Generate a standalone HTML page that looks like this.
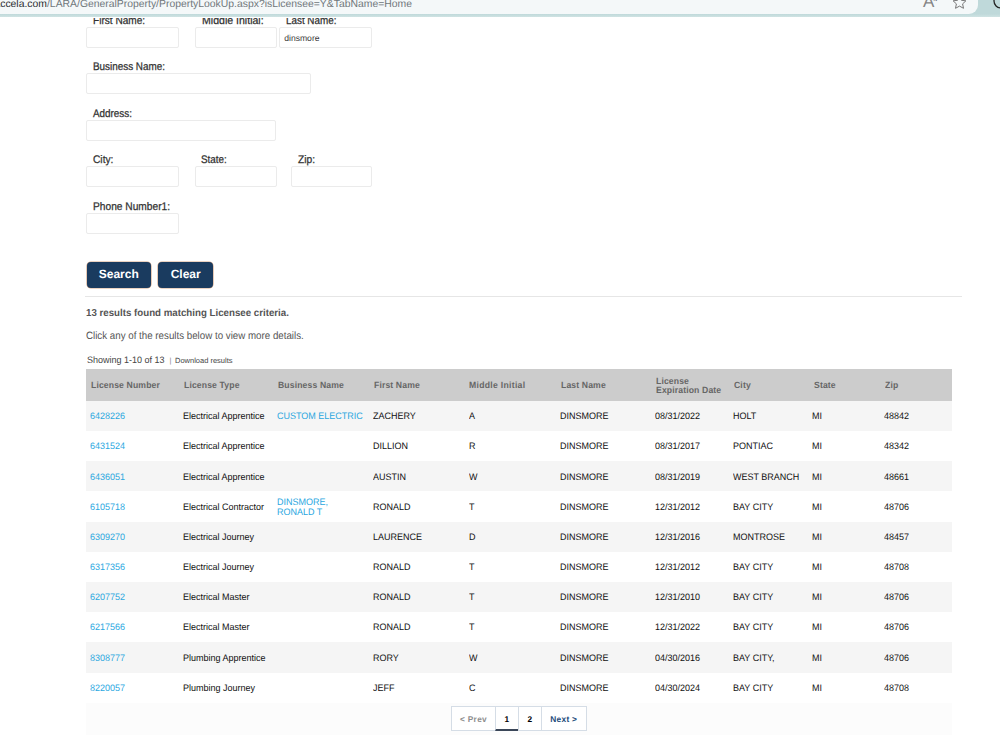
<!DOCTYPE html>
<html lang="en">
<head>
<meta charset="utf-8">
<title>Licensee Search</title>
<style>
*{box-sizing:border-box;margin:0;padding:0}
html,body{width:1000px;height:740px;overflow:hidden;background:#fff;font-family:"Liberation Sans",sans-serif;text-rendering:geometricPrecision}
body{position:relative}
.abs{position:absolute}
#chrome{left:0;top:0;width:1000px;height:18px;background:linear-gradient(#bfd9da 0,#bfd9da 14px,#cfe3e3 17px,#fff 17px,#fff 18px);overflow:hidden;z-index:5}
#pill{left:-20px;top:-20px;width:998px;height:33.5px;background:#f4f8f9;border-radius:0 0 9px 0}
#urltxt{left:-5.6px;top:-0.7px;font-size:10.4px;line-height:12px;color:#70777b;white-space:nowrap}
#urltxt b{font-weight:normal;color:#2a2d30}
.lbl{font-size:11px;line-height:12px;color:#303030;white-space:nowrap;-webkit-text-stroke:0.25px #303030;transform-origin:0 50%;transform:scaleX(.91)}
.inp{border:1px solid #ebebeb;background:#fff;border-radius:2px;height:21px}
.btn{top:262px;height:26px;background:#1a3b5f;border-radius:4px;color:#fff;font-weight:bold;font-size:12px;line-height:24.6px;text-align:center;box-shadow:0 0 0 0.6px rgba(196,128,80,.7)}
#hr{left:85px;top:296px;width:877px;height:1px;background:#e6e6e6}
.t{line-height:12px;white-space:nowrap;transform-origin:0 0}
#tbl{left:86px;top:369px;width:866px}
.hd{position:absolute;left:0;top:0;width:100%;height:32px;background:#cccccc}
.hd span{position:absolute;font-size:9px;font-weight:bold;color:#666;letter-spacing:0.13px;line-height:9px;white-space:nowrap;top:12px;transform-origin:0 0;transform:scaleX(.96)}
.row{position:absolute;left:0;width:100%;height:30.17px;font-size:9.4px;color:#111}
.row.odd{background:#f5f5f5}
.row span{position:absolute;top:9.2px;line-height:12px;white-space:nowrap;transform-origin:0 0;transform:scaleX(.96)}
.row .lnk{color:#2aa7df}
.row .two{top:5.3px;line-height:10px}
.c1{left:4px}.c2{left:96.8px}.c3{left:191px}.c4{left:286.5px}.c5{left:382.5px}.c6{left:473.8px}.c7{left:569px}.c8{left:646.5px}.c9{left:726px}.c10{left:798px}
#foot{left:86px;top:702.7px;width:866px;height:32.3px;background:#fcfcfc}
.pg{position:absolute;top:3.3px;height:25px;border:1px solid #d5dde6;background:#fff;font-size:8.3px;font-weight:bold;text-align:center;line-height:25.5px;color:#8e8e8e;letter-spacing:0.3px}
</style>
</head>
<body>
<div class="abs" id="chrome">
<div class="abs" id="pill"></div>
<div class="abs" id="urltxt"><b>accela.com</b>/LARA/GeneralProperty/PropertyLookUp.aspx?isLicensee=Y&amp;TabName=Home</div>
<div class="abs" style="left:923px;top:-5.5px;font-size:17px;line-height:14px;color:#858585;transform-origin:0 0">A</div>
<div class="abs" style="left:933.5px;top:-3.5px;font-size:5px;line-height:6px;color:#777;font-weight:bold">N</div>
<svg class="abs" style="left:952px;top:-5.5px" width="15" height="15" viewBox="0 0 15 15"><path d="M7.5 1.2l1.9 4.1 4.5.5-3.3 3.1.9 4.4-4-2.2-4 2.2.9-4.4L1.1 5.8l4.5-.5z" fill="none" stroke="#777" stroke-width="1" stroke-linejoin="round"/></svg>
<svg class="abs" style="left:992px;top:-8px" width="18" height="18" viewBox="0 0 18 18"><circle cx="9" cy="9" r="7" fill="none" stroke="#222" stroke-width="1.3"/></svg>
</div>

<div class="abs lbl" style="left:92.6px;top:14.5px;transform:scaleX(.918)">First Name:</div>
<div class="abs lbl" style="left:201.6px;top:14.5px;transform:scaleX(.96)">Middle Initial:</div>
<div class="abs lbl" style="left:285.8px;top:14.5px;transform:scaleX(.896)">Last Name:</div>
<div class="abs inp" style="left:86px;top:27px;width:93px"></div>
<div class="abs inp" style="left:195px;top:27px;width:82px"></div>
<div class="abs inp" style="left:279px;top:27px;width:93px"><span style="position:absolute;left:4.2px;top:5px;font-size:8.6px;line-height:10px;color:#3a3a3a">dinsmore</span></div>

<div class="abs lbl" style="left:93px;top:60.6px;transform:scaleX(.899)">Business Name:</div>
<div class="abs inp" style="left:86px;top:73px;width:225px"></div>

<div class="abs lbl" style="left:92.6px;top:107.6px;transform:scaleX(.898)">Address:</div>
<div class="abs inp" style="left:86px;top:120px;width:190px"></div>

<div class="abs lbl" style="left:92.6px;top:153.8px;transform:scaleX(.927)">City:</div>
<div class="abs lbl" style="left:201.2px;top:153.8px;transform:scaleX(.897)">State:</div>
<div class="abs lbl" style="left:298px;top:153.8px;transform:scaleX(.927)">Zip:</div>
<div class="abs inp" style="left:86px;top:166px;width:93px"></div>
<div class="abs inp" style="left:195px;top:166px;width:82px"></div>
<div class="abs inp" style="left:291px;top:166px;width:81px"></div>

<div class="abs lbl" style="left:92.9px;top:201.2px;transform:scaleX(.927)">Phone Number1:</div>
<div class="abs inp" style="left:86px;top:213px;width:93px"></div>

<div class="abs btn" style="left:86.6px;width:64.4px">Search</div>
<div class="abs btn" style="left:158.2px;width:55px">Clear</div>
<div class="abs" id="hr"></div>

<div class="abs t" style="left:86px;top:308.2px;font-weight:bold;color:#555;font-size:10.1px;transform:scaleX(.962)">13 results found matching Licensee criteria.</div>
<div class="abs t" style="left:86px;top:330.2px;color:#555;font-size:10.6px;transform:scaleX(.92)">Click any of the results below to view more details.</div>
<div class="abs t" style="left:87.4px;top:353.6px;color:#444;font-size:9.4px;transform:scaleX(.959)">Showing 1-10 of 13</div>
<div class="abs t" style="left:169.4px;top:355px;color:#888;font-size:7.5px">|</div>
<div class="abs t" style="left:175px;top:355px;color:#444;font-size:7.5px">Download results</div>

<div class="abs" id="tbl">
<div class="hd">
<span style="left:4.6px">License Number</span>
<span style="left:97.5px">License Type</span>
<span style="left:192px">Business Name</span>
<span style="left:288px">First Name</span>
<span style="left:383px;letter-spacing:.3px">Middle Initial</span>
<span style="left:474.5px">Last Name</span>
<span style="left:570px;top:8px;line-height:9px">License<br>Expiration Date</span>
<span style="left:647.5px">City</span>
<span style="left:727.5px">State</span>
<span style="left:799px">Zip</span>
</div>
<div class="row odd" style="top:32.00px"><span class="c1 lnk">6428226</span><span class="c2">Electrical Apprentice</span><span class="c3 lnk">CUSTOM ELECTRIC</span><span class="c4">ZACHERY</span><span class="c5">A</span><span class="c6">DINSMORE</span><span class="c7">08/31/2022</span><span class="c8">HOLT</span><span class="c9">MI</span><span class="c10">48842</span></div>
<div class="row" style="top:62.17px"><span class="c1 lnk">6431524</span><span class="c2">Electrical Apprentice</span><span class="c4">DILLION</span><span class="c5">R</span><span class="c6">DINSMORE</span><span class="c7">08/31/2017</span><span class="c8">PONTIAC</span><span class="c9">MI</span><span class="c10">48342</span></div>
<div class="row odd" style="top:92.34px"><span class="c1 lnk">6436051</span><span class="c2">Electrical Apprentice</span><span class="c4">AUSTIN</span><span class="c5">W</span><span class="c6">DINSMORE</span><span class="c7">08/31/2019</span><span class="c8">WEST BRANCH</span><span class="c9">MI</span><span class="c10">48661</span></div>
<div class="row" style="top:122.51px"><span class="c1 lnk">6105718</span><span class="c2">Electrical Contractor</span><span class="c3 lnk two">DINSMORE,<br>RONALD T</span><span class="c4">RONALD</span><span class="c5">T</span><span class="c6">DINSMORE</span><span class="c7">12/31/2012</span><span class="c8">BAY CITY</span><span class="c9">MI</span><span class="c10">48706</span></div>
<div class="row odd" style="top:152.68px"><span class="c1 lnk">6309270</span><span class="c2">Electrical Journey</span><span class="c4">LAURENCE</span><span class="c5">D</span><span class="c6">DINSMORE</span><span class="c7">12/31/2016</span><span class="c8">MONTROSE</span><span class="c9">MI</span><span class="c10">48457</span></div>
<div class="row" style="top:182.85px"><span class="c1 lnk">6317356</span><span class="c2">Electrical Journey</span><span class="c4">RONALD</span><span class="c5">T</span><span class="c6">DINSMORE</span><span class="c7">12/31/2012</span><span class="c8">BAY CITY</span><span class="c9">MI</span><span class="c10">48708</span></div>
<div class="row odd" style="top:213.02px"><span class="c1 lnk">6207752</span><span class="c2">Electrical Master</span><span class="c4">RONALD</span><span class="c5">T</span><span class="c6">DINSMORE</span><span class="c7">12/31/2010</span><span class="c8">BAY CITY</span><span class="c9">MI</span><span class="c10">48706</span></div>
<div class="row" style="top:243.19px"><span class="c1 lnk">6217566</span><span class="c2">Electrical Master</span><span class="c4">RONALD</span><span class="c5">T</span><span class="c6">DINSMORE</span><span class="c7">12/31/2022</span><span class="c8">BAY CITY</span><span class="c9">MI</span><span class="c10">48706</span></div>
<div class="row odd" style="top:273.36px"><span class="c1 lnk">8308777</span><span class="c2">Plumbing Apprentice</span><span class="c4">RORY</span><span class="c5">W</span><span class="c6">DINSMORE</span><span class="c7">04/30/2016</span><span class="c8">BAY CITY,</span><span class="c9">MI</span><span class="c10">48706</span></div>
<div class="row" style="top:303.53px"><span class="c1 lnk">8220057</span><span class="c2">Plumbing Journey</span><span class="c4">JEFF</span><span class="c5">C</span><span class="c6">DINSMORE</span><span class="c7">04/30/2024</span><span class="c8">BAY CITY</span><span class="c9">MI</span><span class="c10">48708</span></div>
</div>

<div class="abs" id="foot">
<div class="pg" style="left:365px;width:45px">&lt; Prev</div>
<div class="pg" style="left:409px;width:24px;color:#000;border-bottom:2px solid #3a4658;line-height:25.5px">1</div>
<div class="pg" style="left:432px;width:24px;color:#000">2</div>
<div class="pg" style="left:455px;width:45.5px;color:#1c4a7a">Next &gt;</div>
</div>
</body>
</html>
